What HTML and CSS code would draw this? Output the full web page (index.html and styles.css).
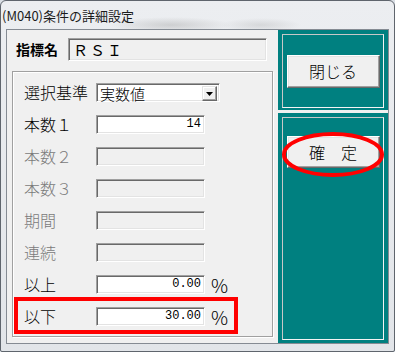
FILE: index.html
```html
<!DOCTYPE html>
<html lang="ja">
<head>
  <meta charset="UTF-8">
  <title>(M040)条件の詳細設定</title>
  <link rel="stylesheet" href="styles.css">
</head>
<body>
  <div class="window">
    <div class="titlebar">(M040)条件の詳細設定</div>
    <div class="client">
      <div class="main">
        <div class="name-row">
          <span class="name-label">指標名</span>
          <div class="name-box">ＲＳＩ</div>
        </div>
        <div class="group">
          <div class="row select-row">
            <span class="label">選択基準</span>
            <div class="combo">
              <span class="combo-text">実数値</span>
              <span class="combo-btn"><svg width="7" height="4" viewBox="0 0 7 4"><path d="M0 0h7L3.5 4z" fill="#000"/></svg></span>
            </div>
          </div>
          <div class="row"><span class="label">本数１</span><div class="field">14</div></div>
          <div class="row off"><span class="label">本数２</span><div class="field"></div></div>
          <div class="row off"><span class="label">本数３</span><div class="field"></div></div>
          <div class="row off"><span class="label">期間</span><div class="field"></div></div>
          <div class="row off"><span class="label">連続</span><div class="field"></div></div>
          <div class="row"><span class="label">以上</span><div class="field">0.00</div><span class="pct">%</span></div>
          <div class="row"><span class="label">以下</span><div class="field">30.00</div><span class="pct">%</span></div>
        </div>
        <div class="mark-box"></div>
      </div>
      <div class="side">
        <div class="panel panel-top">
          <div class="panel-inner"><button class="btn">閉じる</button></div>
        </div>
        <div class="panel panel-bottom">
          <div class="panel-inner"><button class="btn btn-ok">確　定</button></div>
        </div>
        <svg class="mark-ring" width="110" height="54" viewBox="0 0 110 54">
          <ellipse cx="55" cy="26.5" rx="49" ry="20.5" fill="none" stroke="#f00" stroke-width="4"/>
        </svg>
      </div>
    </div>
  </div>
</body>
</html>
```

FILE: styles.css
```css
/* dialog window */
body { margin: 0; background: #d9dee4; font-family: "Noto Sans CJK JP", sans-serif; font-weight: 300; }
.window {
  width: 395px; height: 352px; box-sizing: border-box;
  border: 1px solid #5f656d; border-radius: 6px 6px 2px 2px;
  background: linear-gradient(#eceef1, #e2e5e9);
  overflow: hidden;
}
.titlebar {
  height: 28px; padding-left: 1px;
  font-size: 13px; line-height: 30px; color: #1c1c1c; font-weight: 400;
  background: radial-gradient(ellipse 60px 8px at 170px 24px, rgba(150,150,150,0.35), transparent),
              radial-gradient(ellipse 40px 7px at 260px 24px, rgba(150,150,150,0.25), transparent);
}
.client {
  margin-left: 5px; width: 381px; height: 313px;
  border: 1px solid #858b93;
  display: flex; background: #f0f0f0;
}

/* left side */
.main { width: 271px; position: relative; }
.name-row { display: flex; align-items: center; padding: 8px 0 0 9px; }
.name-label { width: 52px; font-size: 14px; font-weight: bold; line-height: 23px; }
.name-box {
  width: 199px; height: 23px; box-sizing: border-box;
  border: 1px solid; border-color: #a0a0a0 #fff #fff #a0a0a0;
  box-shadow: inset 1px 1px 0 #696969, inset -1px -1px 0 #e3e3e3;
  font-size: 15px; line-height: 21px; padding-left: 4px; letter-spacing: 2px; font-weight: 400;
}
.group {
  margin: 10px 0 0 5px; width: 261px; height: 266px; box-sizing: border-box;
  border: 1px solid #a0a0a0;
  box-shadow: inset 1px 1px 0 #fff, 1px 1px 0 #fff;
  padding: 11px 0 0 11px;
}
.row { display: flex; align-items: center; height: 19px; margin-top: 13px; }
.select-row { margin-top: 0; }
.label { width: 72px; font-size: 16px; line-height: 19px; color: #000; }
.off .label { color: #7a7a7a; }
.field, .combo {
  height: 19px; box-sizing: border-box;
  border: 1px solid; border-color: #a0a0a0 #fff #fff #a0a0a0;
  box-shadow: inset 1px 1px 0 #696969, inset -1px -1px 0 #e3e3e3;
  background: #fff;
}
.field {
  width: 109px; padding-right: 3px; text-align: right;
  font-family: "Liberation Mono", monospace; font-size: 12px; line-height: 17px;
}
.off .field { background: #f0f0f0; }
.pct { margin-left: 6px; font-size: 19px; line-height: 19px; font-weight: 300; }
.combo { width: 124px; display: flex; padding: 2px; }
.combo-text { flex: 1; font-size: 15px; line-height: 15px; padding-left: 1px; }
.combo-btn {
  width: 15px; height: 15px; box-sizing: border-box; background: #f0f0f0;
  border: 1px solid; border-color: #e3e3e3 #696969 #696969 #e3e3e3;
  box-shadow: inset -1px -1px 0 #a0a0a0, inset 1px 1px 0 #fff;
  display: flex; align-items: center; justify-content: center;
}
.mark-box {
  position: absolute; left: 7px; top: 267px; width: 224px; height: 37px;
  box-sizing: border-box; border: 4px solid #f00;
}

/* right side */
.side { width: 110px; position: relative; display: flex; flex-direction: column; gap: 3px; }
.panel { background: #008080; box-sizing: border-box; display: flex; }
.panel-top { height: 80px; padding: 4px 4px 2px 4px; }
.panel-bottom { height: 230px; padding: 4px 4px 3px 4px; }
.panel-inner {
  flex: 1; border: 1px solid; border-color: #c8c8c8 #f4f4f4 #f4f4f4 #c8c8c8;
  display: flex; justify-content: center;
}
.panel-top .panel-inner { align-items: center; }
.btn {
  width: 93px; height: 33px; background: #f0f0f0;
  border: 1px solid; border-color: #fff #696969 #696969 #fff;
  box-shadow: inset -1px -1px 0 #a0a0a0, inset 1px 1px 0 #e3e3e3;
  font-family: "Noto Sans CJK JP", sans-serif; font-size: 16px; font-weight: 300; color: #000;
  padding: 0; margin: 0;
}
.btn-ok { height: 32px; margin-top: 18px; }
.mark-ring { position: absolute; left: 0; top: 98px; }
```
